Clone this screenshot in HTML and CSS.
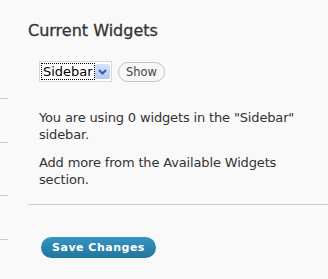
FILE: index.html
```html
<!DOCTYPE html>
<html lang="en">
<head>
    <meta charset="UTF-8">
    <title>Widgets</title>
    <link rel="stylesheet" href="styles.css">
</head>
<body>
    <div id="wrap">
        <ul class="sideMenu">
            <li class="t1"></li>
            <li class="t2"></li>
            <li class="t3"></li>
            <li class="t4"></li>
        </ul>

        <div class="main">
            <h2>Current Widgets</h2>

            <div class="pickGroup">
                <div class="fakeSelect">
                    <span class="selText">Sidebar</span>
                    <span class="selArrow">
                        <svg width="9" height="6" viewBox="0 0 9 6">
                            <path d="M1 1 L4.5 4.5 L8 1" fill="none" stroke="#3a5aa8" stroke-width="2"/>
                        </svg>
                    </span>
                </div>
                <button type="button" class="showBtn">Show</button>
            </div>

            <div class="desc">
                <p>You are using 0 widgets in the "Sidebar" sidebar.</p>
                <p>Add more from the Available Widgets section.</p>
            </div>

            <p class="submit">
                <button type="button" class="saveBtn">Save Changes</button>
            </p>
        </div>
    </div>
</body>
</html>
```

FILE: styles.css
```css
body{
    margin: 0;
    background: #f9f9f9;
    font-family: "DejaVu Sans", Verdana, sans-serif;
    color: #333;
}

#wrap{
    display: flex;
    height: 279px;
}

.sideMenu{
    list-style: none;
    margin: 0;
    padding: 0;
    width: 8px;
    flex-shrink: 0;
}
.sideMenu li{
    border-bottom: 1px solid #ccc;
}
.t1{ height: 98px; }
.t2{ height: 43px; }
.t3{ height: 52px; }
.t4{ height: 43px; }

.main{
    flex: 1;
    margin-left: 20px;
}

.main h2{
    margin: 0;
    padding-top: 21px;
    font-size: 16px;
    font-weight: normal;
    line-height: 20px;
    color: #333;
    -webkit-text-stroke: 0.3px #333;
}

.pickGroup{
    display: flex;
    align-items: center;
    gap: 6px;
    margin-top: 20px;
    padding-left: 11px;
}

.fakeSelect{
    display: flex;
    align-items: center;
    width: 69px;
    height: 19px;
    border: 1px solid #d8d8d8;
    background: #fff;
    padding: 0 1px;
}
.selText{
    flex: 1;
    font-size: 13px;
    line-height: 15px;
    color: #000;
    border: 1px dotted #000;
    padding-left: 1px;
    overflow: hidden;
    white-space: nowrap;
}
.selArrow{
    display: flex;
    align-items: center;
    justify-content: center;
    width: 15px;
    height: 15px;
    border-radius: 2px;
    background: linear-gradient(#d6e2fb, #b5c9f3);
}

.showBtn{
    height: 20px;
    width: 47px;
    padding: 0;
    border: 1px solid #c4c4c4;
    border-radius: 10px;
    background: #f7f7f7;
    font-family: "DejaVu Sans", Verdana, sans-serif;
    font-size: 11.5px;
    color: #444;
}

.desc{
    margin-top: 27px;
    padding: 0 0 16px 11px;
    border-bottom: 1px solid #ccc;
}
.desc p{
    margin: 0 0 11px;
    font-size: 13px;
    line-height: 17px;
    letter-spacing: -0.15px;
    color: #333;
}
.desc p:last-child{
    margin-bottom: 0;
}

.submit{
    margin: 31px 0 0;
    padding-left: 13px;
}
.saveBtn{
    width: 115px;
    height: 21px;
    padding: 0;
    border: none;
    border-radius: 11px;
    background: linear-gradient(#3694c4, #21759b);
    color: #fff;
    font-family: "DejaVu Sans", Verdana, sans-serif;
    font-size: 11px;
    font-weight: bold;
    letter-spacing: 0.5px;
}
```
